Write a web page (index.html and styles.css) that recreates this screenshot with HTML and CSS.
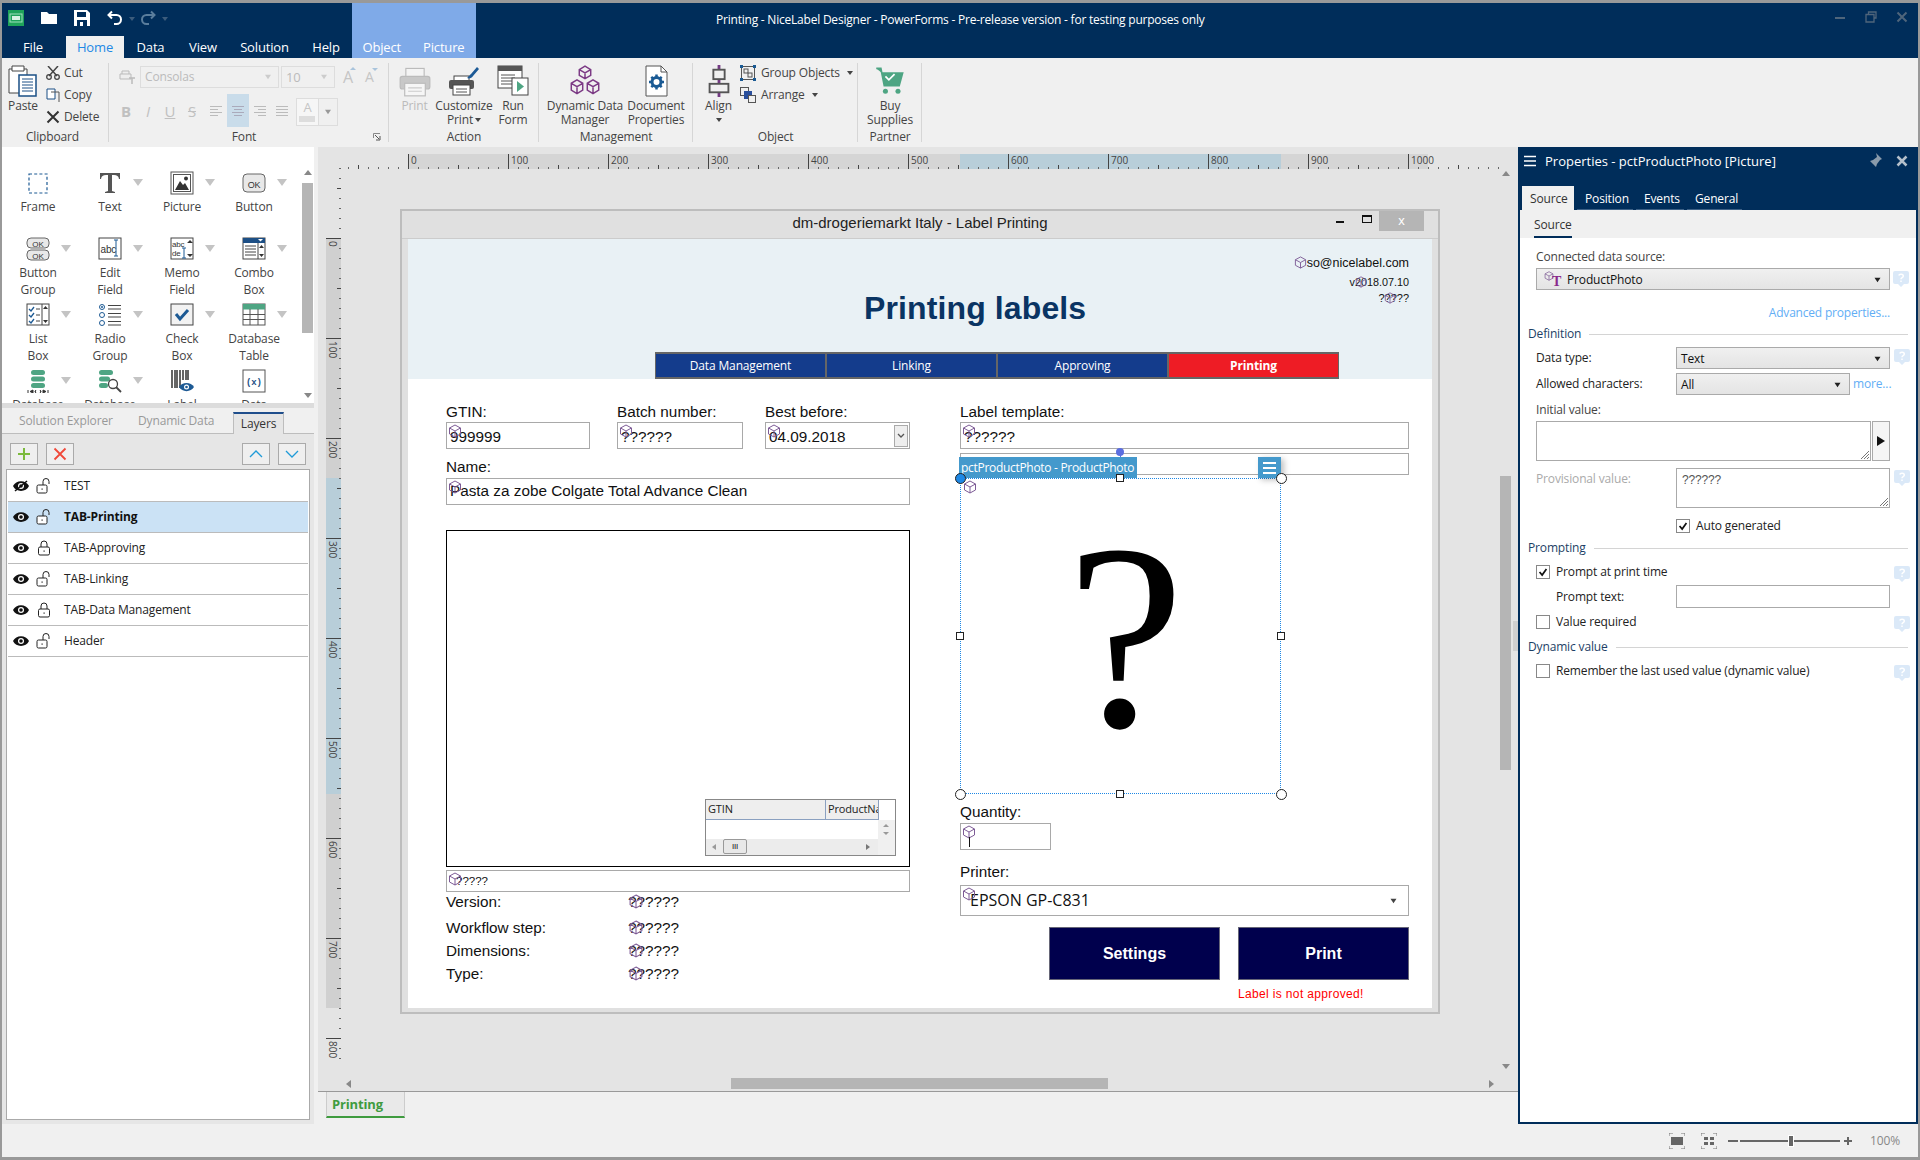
FILE: index.html
```html
<!DOCTYPE html>
<html lang="en">
<head>
<meta charset="utf-8">
<title>Printing - NiceLabel Designer</title>
<link rel="stylesheet" href="styles.css">
</head>
<body>
<svg class="defs" aria-hidden="true"><defs>
<symbol id="cube" viewBox="0 0 14 14"><path d="M7 1l5.500 3v6L7 13l-5.500-3V4zM1.500 4L7 7l5.500-3M7 7v6" fill="none" stroke="#7d5b96" stroke-width="1"/></symbol>
<symbol id="arrow" viewBox="0 0 10 8"><path d="M1 1h8L5 7z" fill="currentColor"/></symbol>
<symbol id="eye" viewBox="0 0 16 12"><path d="M0 6c3-6.500 13-6.500 16 0-3 6.500-13 6.500-16 0z" fill="#111"/><circle cx="8" cy="6" r="3" fill="#fff"/><circle cx="8" cy="6" r="1.800" fill="#111"/></symbol>
<symbol id="unlock" viewBox="0 0 16 16"><rect x="1" y="7" width="10" height="8" rx="1.500" fill="#fff" stroke="#222"/><path d="M7 7V3.500a3 3 0 0 1 6 0V6" fill="none" stroke="#222"/><rect x="5.500" y="10.500" width="1.200" height="1.200" fill="#222"/></symbol>
<symbol id="lock" viewBox="0 0 16 16"><rect x="2.500" y="7" width="11" height="8" rx="1.500" fill="#fff" stroke="#222"/><path d="M5 7V4a3 3 0 0 1 6 0v3" fill="none" stroke="#222"/><rect x="7.500" y="10.500" width="1.200" height="1.200" fill="#222"/></symbol>
<symbol id="help" viewBox="0 0 16 16"><path d="M2 0h12a2 2 0 0 1 2 2v9a2 2 0 0 1-2 2h-3l-3 3-3-3H2a2 2 0 0 1-2-2V2a2 2 0 0 1 2-2z" fill="#dbe9f8"/><path d="M5.800 4.500C6.200 2.800 10.300 2.800 10.300 5c0 1.700-2.300 1.500-2.300 3.300M8 9.600v1.300" fill="none" stroke="#fff" stroke-width="1.500"/></symbol>
<symbol id="check" viewBox="0 0 14 14"><path d="M3 7l3 3.500L11 3.500" fill="none" stroke="#111" stroke-width="2"/></symbol>
<symbol id="grip" viewBox="0 0 12 12"><path d="M11 3l-8 8M11 6l-5 5M11 9l-2 2" stroke="#777" fill="none"/></symbol>
</defs></svg>

<div class="app">
  <header class="titlebar">
    <div class="tb-left">
      <div class="qat">
        <svg class="qi" viewBox="0 0 16 16"><rect width="16" height="16" fill="#1fa35a"/><rect x="2" y="4" width="12" height="8" fill="none" stroke="#9fe0bc"/><rect x="4" y="6" width="8" height="4" fill="#d8f3e3"/></svg>
        <svg class="qi" viewBox="0 0 16 16"><path d="M0 2h6l2 2h8v10H0z" fill="#fff"/></svg>
        <svg class="qi" viewBox="0 0 16 16"><path d="M0 0h13l3 3v13H0z" fill="#fff"/><rect x="3" y="2" width="9" height="5" fill="#002d5a"/><rect x="3" y="10" width="10" height="6" fill="#002d5a"/><rect x="6" y="12" width="3" height="4" fill="#fff"/></svg>
        <svg class="qi" viewBox="0 0 16 16"><path d="M5 1.500L1.500 5 5 8.500M2 5h7.500a4.500 4.500 0 0 1 0 9H7" fill="none" stroke="#fff" stroke-width="2"/></svg>
        <i class="qm"></i>
        <svg class="qi dim" viewBox="0 0 16 16"><path d="M11 1.500L14.500 5 11 8.500M14 5H6.500a4.500 4.500 0 0 0 0 9H9" fill="none" stroke="#5a7d9c" stroke-width="2"/></svg>
        <i class="qm"></i>
      </div>
      <nav class="tabs">
        <span class="tab t-file">File</span>
        <span class="tab t-home">Home</span>
        <span class="tab t-data">Data</span>
        <span class="tab t-view">View</span>
        <span class="tab t-sol">Solution</span>
        <span class="tab t-help">Help</span>
      </nav>
    </div>
    <div class="context">
      <span class="tab t-obj">Object</span>
      <span class="tab t-pic">Picture</span>
    </div>
    <div class="wintitle">Printing - NiceLabel Designer - PowerForms - Pre-release version - for testing purposes only</div>
    <div class="winctl">
      <svg viewBox="0 0 12 12"><path d="M1 7h10" stroke="#4f657b" stroke-width="2"/></svg>
      <svg viewBox="0 0 12 12"><path d="M3.500 3V1h7.500v6H9M1 3.500h8V11H1z" fill="none" stroke="#4f657b" stroke-width="1.300"/></svg>
      <svg viewBox="0 0 12 12"><path d="M1.500 1.500l9 9M10.500 1.500l-9 9" stroke="#4f657b" stroke-width="2"/></svg>
    </div>
  </header>

  <section class="ribbon">
    <div class="group g-clip">
      <div class="g-body">
        <div class="big b-paste">
          <svg class="bi" viewBox="0 0 30 32"><path d="M1 4h18v24H1z" fill="#fff" stroke="#444"/><path d="M4 1h12v5H4z" fill="#fff" stroke="#444"/><rect x="11" y="10" width="17" height="21" fill="#fff" stroke="#1a4f85" stroke-width="1.500"/><path d="M14 14h11M14 17h11M14 20h11M14 23h11M14 26h11" stroke="#1a4f85"/></svg>
          <span>Paste</span>
        </div>
        <div class="smalls">
          <div class="sm"><svg viewBox="0 0 14 14"><path d="M2 0l9 10M12 0L3 10" stroke="#444" stroke-width="1.500"/><circle cx="3" cy="11" r="2.300" fill="none" stroke="#444" stroke-width="1.300"/><circle cx="11" cy="11" r="2.300" fill="none" stroke="#444" stroke-width="1.300"/></svg><span>Cut</span></div>
          <div class="sm"><svg viewBox="0 0 14 14"><path d="M1 1h8v10H1z" fill="#fff" stroke="#1a4f85"/><path d="M5 4h8v10" fill="none" stroke="#555"/></svg><span>Copy</span></div>
          <div class="sm"><svg viewBox="0 0 14 14"><path d="M1.500 1.500l11 11M12.500 1.500l-11 11" stroke="#333" stroke-width="2"/></svg><span>Delete</span></div>
        </div>
      </div>
      <div class="g-label">Clipboard</div>
    </div>

    <div class="group g-font">
      <div class="g-body fontbody">
        <div class="frow1">
          <svg class="fp" viewBox="0 0 16 14"><path d="M3 4V1h7v3M1 4h11v5H1z" fill="#eee" stroke="#bbb"/><path d="M10 8h6M13 8v6" stroke="#bbb" stroke-width="1.500"/></svg>
          <div class="fcombo c-name"><span>Consolas</span><svg class="carr"><use href="#arrow"/></svg></div>
          <div class="fcombo c-size"><span>10</span><svg class="carr"><use href="#arrow"/></svg></div>
          <span class="grow-a">A</span><span class="shrink-a">A</span>
        </div>
        <div class="frow2">
          <span class="fb f-b">B</span><span class="fb f-i">I</span><span class="fb f-u">U</span><span class="fb f-s">S</span>
          <span class="fb al"><svg viewBox="0 0 12 10"><path d="M0 .500h12M0 3.500h8M0 6.500h12M0 9.500h8" stroke="#bbb"/></svg></span>
          <span class="fb al sel"><svg viewBox="0 0 12 10"><path d="M0 .500h12M2 3.500h8M0 6.500h12M2 9.500h8" stroke="#aab"/></svg></span>
          <span class="fb al"><svg viewBox="0 0 12 10"><path d="M0 .500h12M4 3.500h8M0 6.500h12M4 9.500h8" stroke="#bbb"/></svg></span>
          <span class="fb al"><svg viewBox="0 0 12 10"><path d="M0 .500h12M0 3.500h12M0 6.500h12M0 9.500h12" stroke="#bbb"/></svg></span>
          <div class="fcolor"><span class="fc-a">A<i class="fc-bar"></i></span><span class="fc-d"><svg class="carr"><use href="#arrow"/></svg></span></div>
        </div>
      </div>
      <div class="g-label">Font</div>
      <svg class="launcher" viewBox="0 0 8 8"><path d="M.500 5V.500H7" fill="none" stroke="#888"/><path d="M2 2l4 4M7 3v4H3" fill="none" stroke="#555"/></svg>
    </div>

    <div class="group g-action">
      <div class="g-body">
        <div class="big b-print off">
          <svg class="bi" viewBox="0 0 28 28"><rect x="6" y="3" width="16" height="8" fill="#f4f4f4" stroke="#bbb"/><rect x="1" y="10" width="26" height="11" rx="2" fill="#c8c8c8" stroke="#bbb"/><rect x="5" y="16" width="18" height="11" fill="#f6f6f6" stroke="#bbb"/><path d="M8 20h12M8 23h12" stroke="#ccc"/></svg>
          <span>Print</span>
        </div>
        <div class="big b-cust">
          <svg class="bi" viewBox="0 0 32 30"><rect x="6" y="10" width="15" height="6" fill="#fff" stroke="#444"/><rect x="1" y="14" width="25" height="9" rx="2" fill="#555"/><rect x="5" y="19" width="17" height="10" fill="#fff" stroke="#444"/><path d="M8 23h11M8 26h11" stroke="#555"/><path d="M19 12c2-1 2-3 4-4l6-7 2 2-6 7c-1 2-4 3-6 2z" fill="#1d5a96"/></svg>
          <span>Customize<br>Print<i class="mini"></i></span>
        </div>
        <div class="big b-run">
          <svg class="bi" viewBox="0 0 32 32"><rect x="1" y="1" width="24" height="22" fill="#fff" stroke="#444"/><rect x="1" y="1" width="24" height="5" fill="#555"/><path d="M4 10h14M4 13h14M4 16h14M4 19h14" stroke="#555"/><rect x="15" y="13" width="16" height="17" fill="#fff" stroke="#444"/><path d="M20 16l7 5.500-7 5.500z" fill="#4ea583"/></svg>
          <span>Run<br>Form</span>
        </div>
      </div>
      <div class="g-label">Action</div>
    </div>

    <div class="group g-mgmt">
      <div class="g-body">
        <div class="big b-dyn">
          <svg class="bi" viewBox="0 0 28 28"><g fill="none" stroke="#7c3a85" stroke-width="1.300"><path d="M14 1l5 3v5l-5 3-5-3V4zM9 4l5 3 5-3M14 7v5"/><path d="M7 13l5 3v6l-5 3-5-3v-6zM2 16l5 3 5-3M7 19v6"/><path d="M21 13l5 3v6l-5 3-5-3v-6zM16 16l5 3 5-3M21 19v6"/></g></svg>
          <span>Dynamic Data<br>Manager</span>
        </div>
        <div class="big b-doc">
          <svg class="bi" viewBox="0 0 28 32"><path d="M4 1h15l6 6v24H4z" fill="#fff" stroke="#555"/><path d="M19 1v6h6" fill="none" stroke="#555"/><circle cx="14.500" cy="17" r="4.500" fill="none" stroke="#1a5a94" stroke-width="3"/><path d="M14.500 9.500v3M14.500 21.500v3M7 17h3M19 17h3M9.300 11.800l2 2M17.700 20.200l2 2M19.700 11.800l-2 2M11.300 20.200l-2 2" stroke="#1a5a94" stroke-width="2.500"/></svg>
          <span>Document<br>Properties</span>
        </div>
      </div>
      <div class="g-label">Management</div>
    </div>

    <div class="group g-obj">
      <div class="g-body">
        <div class="big b-align">
          <svg class="bi" viewBox="0 0 22 34"><rect x="9.500" y="0" width="3" height="34" fill="#743a84"/><rect x="5" y="5" width="12" height="10" fill="#f0f0f0" stroke="#555" stroke-width="2"/><rect x="1" y="20" width="20" height="9" fill="#f0f0f0" stroke="#555" stroke-width="2"/></svg>
          <span>Align<br><i class="mini center"></i></span>
        </div>
        <div class="smalls objs">
          <div class="sm"><svg viewBox="0 0 16 16"><rect x="1.500" y="1.500" width="13" height="13" fill="none" stroke="#555"/><rect x="4" y="4" width="4" height="4" fill="none" stroke="#555"/><rect x="8" y="8" width="4" height="4" fill="none" stroke="#555"/><g fill="#1a5a94"><rect width="3" height="3"/><rect x="13" width="3" height="3"/><rect y="13" width="3" height="3"/><rect x="13" y="13" width="3" height="3"/></g></svg><span>Group Objects</span><i class="mini"></i></div>
          <div class="sm"><svg viewBox="0 0 16 16"><rect x=".500" y=".500" width="8" height="8" fill="none" stroke="#555"/><rect x="4" y="4" width="8" height="8" fill="#2a4f9c"/><rect x="8.500" y="8.500" width="7" height="7" fill="#f0f0f0" stroke="#555"/></svg><span>Arrange</span><i class="mini"></i></div>
        </div>
      </div>
      <div class="g-label">Object</div>
    </div>

    <div class="group g-partner">
      <div class="g-body">
        <div class="big b-buy">
          <svg class="bi" viewBox="0 0 26 28"><path d="M1 3h4l3 15h13l3-11H6" fill="#4ea583" stroke="#4ea583" stroke-width="1.500"/><path d="M9 10l3 3 5-5" fill="none" stroke="#fff" stroke-width="1.500"/><circle cx="9" cy="23" r="2.200" fill="#4ea583"/><circle cx="20" cy="23" r="2.200" fill="#4ea583"/></svg>
          <span>Buy<br>Supplies</span>
        </div>
      </div>
      <div class="g-label">Partner</div>
    </div>
  </section>

  <main class="main">
    <aside class="left">
      <div class="toolbox">
        <div class="tool-grid">
          <div class="tool"><svg class="ti" viewBox="0 0 24 24"><rect x="3" y="3" width="18" height="19" fill="none" stroke="#1d5a94" stroke-width="1.200" stroke-dasharray="3 2.200"/></svg><span>Frame</span></div>
          <div class="tool drop"><svg class="ti" viewBox="0 0 24 24"><path d="M2 2h20v6h-1c-.5-3-2-4-5-4h-2v16l3 1v1H7v-1l3-1V4H8c-3 0-4.500 1-5 4H2z" fill="#555"/></svg><span>Text</span></div>
          <div class="tool drop"><svg class="ti" viewBox="0 0 24 24"><rect x="1" y="1" width="22" height="22" fill="#fff" stroke="#555"/><rect x="3.500" y="3.500" width="17" height="17" fill="#fff" stroke="#555"/><path d="M5 19l5-9 3 4 2-2 4 7z" fill="#333"/><circle cx="16" cy="7.500" r="2" fill="#333"/></svg><span>Picture</span></div>
          <div class="tool drop"><svg class="ti" viewBox="0 0 24 24"><rect x="1" y="3" width="22" height="18" rx="4" fill="#e8e8e8" stroke="#666"/><text x="12" y="16.500" class="oktxt">OK</text></svg><span>Button</span></div>

          <div class="tool drop"><svg class="ti" viewBox="0 0 24 24"><rect x="1" y="1" width="22" height="10" rx="4" fill="#e8e8e8" stroke="#666"/><rect x="1" y="13" width="22" height="10" rx="4" fill="#e8e8e8" stroke="#666"/><text x="12" y="9.500" class="oktxt sm2">OK</text><text x="12" y="21.500" class="oktxt sm2">OK</text></svg><span>Button<br>Group</span></div>
          <div class="tool drop"><svg class="ti" viewBox="0 0 24 24"><rect x="1" y="1" width="22" height="21" fill="#fff" stroke="#444"/><text x="2.500" y="16" class="abctxt">abc</text><path d="M18 3v16M16 3h4M16 19h4" stroke="#1d5a94"/></svg><span>Edit<br>Field</span></div>
          <div class="tool drop"><svg class="ti" viewBox="0 0 24 24"><rect x="1" y="1" width="22" height="21" fill="#fff" stroke="#444"/><text x="2" y="10" class="abctxt sm3">abc</text><text x="2" y="19" class="abctxt sm3">de</text><path d="M14 11v10M12 11h4M12 21h4" stroke="#1d5a94"/><path d="M17 6l3-3 3 3zM17 17l3 3 3-3z" fill="#333"/></svg><span>Memo<br>Field</span></div>
          <div class="tool drop"><svg class="ti" viewBox="0 0 24 24"><rect x="1" y="1" width="22" height="21" fill="#fff" stroke="#444"/><rect x="1" y="1" width="22" height="5" fill="#1d4f85"/><path d="M16 2l2.500 2.500L21 2z" fill="#fff"/><path d="M3 9h11M3 12h11M3 15h11M3 18h11M16 6v16" stroke="#444"/><path d="M17 11l2.500-3 2.500 3zM17 17l2.500 3 2.500-3z" fill="#333"/></svg><span>Combo<br>Box</span></div>

          <div class="tool drop"><svg class="ti" viewBox="0 0 24 24"><rect x="1" y="1" width="22" height="21" fill="#fff" stroke="#444"/><path d="M3 6l2 2 3-4M3 12l2 2 3-4M3 18l2 2 3-4" fill="none" stroke="#1d5a94" stroke-width="1.300"/><path d="M10 6h4M10 12h4M10 18h4M16 1v21" stroke="#444"/><path d="M17 6l2.500-3 2.500 3zM17 17l2.500 3 2.500-3z" fill="#333"/></svg><span>List<br>Box</span></div>
          <div class="tool drop"><svg class="ti" viewBox="0 0 24 24"><g fill="none" stroke="#1d5a94"><circle cx="4" cy="4" r="2.500"/><circle cx="4" cy="12" r="2.500"/><circle cx="4" cy="20" r="2.500"/></g><circle cx="4" cy="4" r="1" fill="#1d5a94"/><path d="M10 2.500h13M10 6h13M10 10.500h13M10 14h13M10 18.500h13M10 22h13" stroke="#444"/></svg><span>Radio<br>Group</span></div>
          <div class="tool drop"><svg class="ti" viewBox="0 0 24 24"><rect x="1" y="1" width="22" height="21" fill="#f2f2f2" stroke="#444"/><path d="M6 11l4 5 8-9" fill="none" stroke="#1d5a94" stroke-width="3"/></svg><span>Check<br>Box</span></div>
          <div class="tool drop"><svg class="ti" viewBox="0 0 24 24"><rect x="1" y="1" width="22" height="21" fill="#fff" stroke="#555"/><rect x="1" y="1" width="22" height="5.500" fill="#4ea583"/><path d="M1 11.500h22M1 16.500h22M8 6v16M16 6v16" stroke="#555"/></svg><span>Database<br>Table</span></div>

          <div class="tool drop"><svg class="ti" viewBox="0 0 24 24"><g fill="#4ea583"><rect x="5" y="1" width="14" height="5" rx="2.500"/><rect x="5" y="7.500" width="14" height="5" rx="2.500"/><rect x="5" y="14" width="14" height="5" rx="2.500"/></g><path d="M2 24v-3M7 21l-3 1.500L7 24zM10 21l-1 1.500 1 1.500M14 21l1 1.500-1 1.500M17 21l3 1.500-3 1.500zM22 24v-3" stroke="#333" fill="#333"/></svg><span>Database</span></div>
          <div class="tool drop"><svg class="ti" viewBox="0 0 24 24"><g fill="#4ea583"><rect x="1" y="1" width="14" height="5" rx="2.500"/><rect x="1" y="7.500" width="11" height="5" rx="2.500"/><rect x="1" y="14" width="9" height="5" rx="2.500"/></g><circle cx="15" cy="15" r="4.500" fill="#fff" stroke="#444" stroke-width="1.300"/><path d="M18 18l5 5" stroke="#444" stroke-width="1.800"/></svg><span>Database</span></div>
          <div class="tool"><svg class="ti" viewBox="0 0 24 24"><path d="M2 1v18M5 1v18M7 1v18M10 1v18M13 1v10M16 1v10M18 1v10" stroke="#333" stroke-width="1.500"/><path d="M9 18c3-5.500 12-5.500 15 0-3 5.500-12 5.500-15 0z" fill="#1d5a94"/><circle cx="16.500" cy="18" r="2.500" fill="#fff"/><circle cx="16.500" cy="18" r="1.300" fill="#1d5a94"/></svg><span>Label</span></div>
          <div class="tool"><svg class="ti" viewBox="0 0 24 24"><rect x="1" y="1" width="22" height="22" fill="#fff" stroke="#555"/><text x="12" y="15.500" class="xtxt">(x)</text></svg><span>Data</span></div>
        </div>
        <div class="vbar tb-bar"><i class="up"></i><b></b><i class="dn"></i></div>
      </div>
      <div class="split"></div>
      <div class="ptabs">
        <span class="pt pt1">Solution Explorer</span>
        <span class="pt pt2">Dynamic Data</span>
        <span class="pt pt3">Layers</span>
      </div>
      <div class="ltools">
        <button class="lb"><svg viewBox="0 0 14 14"><path d="M7 1v12M1 7h12" stroke="#7cba3d" stroke-width="2"/></svg></button>
        <button class="lb"><svg viewBox="0 0 14 14"><path d="M1.500 1.500l11 11M12.500 1.500l-11 11" stroke="#f0493a" stroke-width="1.800"/></svg></button>
        <button class="lb push"><svg viewBox="0 0 14 14"><path d="M1 10l6-6 6 6" fill="none" stroke="#1f9bd8" stroke-width="1.300"/></svg></button>
        <button class="lb"><svg viewBox="0 0 14 14"><path d="M1 4l6 6 6-6" fill="none" stroke="#1f9bd8" stroke-width="1.300"/></svg></button>
      </div>
      <div class="layers">
        <div class="layer"><svg class="eye" viewBox="0 0 16 12"><use href="#eye"/><path d="M2 11L14 1" stroke="#111" stroke-width="1.500"/></svg><svg class="lk"><use href="#unlock"/></svg><span>TEST</span></div>
        <div class="layer active"><svg class="eye"><use href="#eye"/></svg><svg class="lk"><use href="#unlock"/></svg><span>TAB-Printing</span></div>
        <div class="layer"><svg class="eye"><use href="#eye"/></svg><svg class="lk"><use href="#lock"/></svg><span>TAB-Approving</span></div>
        <div class="layer"><svg class="eye"><use href="#eye"/></svg><svg class="lk"><use href="#unlock"/></svg><span>TAB-Linking</span></div>
        <div class="layer"><svg class="eye"><use href="#eye"/></svg><svg class="lk"><use href="#lock"/></svg><span>TAB-Data Management</span></div>
        <div class="layer"><svg class="eye"><use href="#eye"/></svg><svg class="lk"><use href="#unlock"/></svg><span>Header</span></div>
      </div>
    </aside>
    <div class="gap"></div>

    <div class="designer">
      <div class="canvas">
        <div class="hruler">
          <div class="h-track"><i class="h-sel"></i></div>
          <div class="h-labels"><span>0</span><span>100</span><span>200</span><span>300</span><span>400</span><span>500</span><span>600</span><span>700</span><span>800</span><span>900</span><span>1000</span></div>
        </div>
        <div class="vruler">
          <div class="v-track"><i class="v-sel"></i></div>
          <div class="v-labels"><span>0</span><span>100</span><span>200</span><span>300</span><span>400</span><span>500</span><span>600</span><span>700</span><span>800</span></div>
        </div>

        <div class="form">
          <div class="form-title">
            <span>dm-drogeriemarkt Italy - Label Printing</span>
            <i class="fw-min"></i><i class="fw-max"></i><b class="fw-x">x</b>
          </div>
          <div class="form-body">
            <div class="hband"></div>
            <h1 class="ctl h-title">Printing labels</h1>
            <div class="ctl h-mail">so@nicelabel.com<svg class="cube cb-mail"><use href="#cube"/></svg></div>
            <div class="ctl h-ver">v2018.07.10<svg class="cube cb-ver"><use href="#cube"/></svg></div>
            <div class="ctl h-q">?????<svg class="cube cb-q"><use href="#cube"/></svg></div>
            <div class="ctl ftabs"><span>Data Management</span><span>Linking</span><span>Approving</span><span class="on">Printing</span></div>

            <label class="ctl lbl l-gtin">GTIN:</label>
            <div class="ctl inp i-gtin"><svg class="cube"><use href="#cube"/></svg>999999</div>
            <label class="ctl lbl l-batch">Batch number:</label>
            <div class="ctl inp i-batch"><svg class="cube"><use href="#cube"/></svg>??????</div>
            <label class="ctl lbl l-best">Best before:</label>
            <div class="ctl inp i-best"><svg class="cube"><use href="#cube"/></svg>04.09.2018<span class="spin"><svg viewBox="0 0 10 8"><path d="M2 2l3 3 3-3" fill="none" stroke="#555" stroke-width="1.300"/></svg></span></div>
            <label class="ctl lbl l-name">Name:</label>
            <div class="ctl inp i-name"><svg class="cube"><use href="#cube"/></svg>Pasta za zobe Colgate Total Advance Clean</div>

            <div class="ctl blackbox"></div>
            <div class="ctl dbgrid">
              <div class="dg-head"><span class="dg-c1">GTIN</span><span class="dg-c2">ProductNa</span></div>
              <div class="dg-body"></div>
              <div class="dg-scroll"><i class="ar-l"></i><b class="dg-thumb">III</b><i class="ar-r"></i></div>
              <div class="dg-v"><i class="ar-u"></i><i class="ar-d"></i></div>
            </div>
            <div class="ctl inp i-small"><svg class="cube"><use href="#cube"/></svg>?????</div>

            <label class="ctl lbl l-ver">Version:</label><div class="ctl val v-ver"><svg class="cube"><use href="#cube"/></svg>??????</div>
            <label class="ctl lbl l-wf">Workflow step:</label><div class="ctl val v-wf"><svg class="cube"><use href="#cube"/></svg>??????</div>
            <label class="ctl lbl l-dim">Dimensions:</label><div class="ctl val v-dim"><svg class="cube"><use href="#cube"/></svg>??????</div>
            <label class="ctl lbl l-type">Type:</label><div class="ctl val v-type"><svg class="cube"><use href="#cube"/></svg>??????</div>

            <label class="ctl lbl l-tpl">Label template:</label>
            <div class="ctl inp i-tpl"><svg class="cube"><use href="#cube"/></svg>??????</div>
            <div class="ctl inp i-tpl2"></div>

            <div class="ctl pic">?</div>
            <svg class="cube ctl cb-pic"><use href="#cube"/></svg>
            <div class="ctl rot-line"></div>
            <div class="ctl sel-tag">pctProductPhoto - ProductPhoto</div>
            <div class="ctl sel-menu"><i></i><i></i><i></i></div>
            <i class="ctl hd round rot"></i>
            <i class="ctl hd round tl"></i><i class="ctl hd round tr"></i><i class="ctl hd round bl"></i><i class="ctl hd round br"></i>
            <i class="ctl hd sq tc"></i><i class="ctl hd sq bc"></i><i class="ctl hd sq ml"></i><i class="ctl hd sq mr"></i>

            <label class="ctl lbl l-qty">Quantity:</label>
            <div class="ctl inp i-qty"><svg class="cube"><use href="#cube"/></svg><span class="caret"></span></div>
            <label class="ctl lbl l-prn">Printer:</label>
            <div class="ctl inp i-prn"><svg class="cube"><use href="#cube"/></svg>EPSON GP-C831<svg class="prn-arr"><use href="#arrow"/></svg></div>
            <div class="ctl act a-set">Settings</div>
            <div class="ctl act a-prn">Print</div>
            <div class="ctl note">Label is not approved!</div>
          </div>
        </div>

        <div class="vbar cv-bar"><i class="up"></i><b></b><i class="dn"></i></div>
        <div class="hbar"><i class="ar-l"></i><b></b><i class="ar-r"></i></div>
        <div class="grip"></div>
      </div>
      <div class="sheets"><span class="sheet">Printing</span></div>
    </div>

    <aside class="props">
      <div class="p-head">
        <svg class="p-ham" viewBox="0 0 12 12"><path d="M0 1.500h12M0 6h12M0 10.500h12" stroke="#fff" stroke-width="1.500"/></svg>
        <span class="p-title">Properties - pctProductPhoto [Picture]</span>
        <svg class="p-pin" viewBox="0 0 16 16"><path d="M10 0l6 6-2 1-3 4-1 3-3-3-5 5 5-5-3-3 3-1 4-3z" fill="#8a9bab"/></svg>
        <svg class="p-x" viewBox="0 0 12 12"><path d="M1.500 1.500l9 9M10.500 1.500l-9 9" stroke="#b5c0cb" stroke-width="2.500"/></svg>
      </div>
      <div class="p-tabs">
        <span class="pp on">Source</span><span class="pp">Position</span><span class="pp">Events</span><span class="pp">General</span>
      </div>
      <div class="p-sub"><span>Source</span></div>
      <div class="p-body">
        <div class="pr r1">Connected data source:</div>
        <div class="pr r2 combo full"><svg class="cube cb-ds"><use href="#cube"/></svg><span class="ds-t">T</span><span>ProductPhoto</span><svg class="co-arr"><use href="#arrow"/></svg><svg class="hlp"><use href="#help"/></svg></div>
        <div class="pr r3 adv">Advanced properties...</div>
        <div class="pr r4 sec"><span>Definition</span></div>
        <div class="pr r5 fld"><span class="fl">Data type:</span><div class="combo"><span>Text</span><svg class="co-arr"><use href="#arrow"/></svg></div><svg class="hlp"><use href="#help"/></svg></div>
        <div class="pr r6 fld"><span class="fl">Allowed characters:</span><div class="combo"><span>All</span><svg class="co-arr"><use href="#arrow"/></svg></div><span class="more">more...</span></div>
        <div class="pr r7">Initial value:</div>
        <div class="pr r8 tarow"><div class="ta"><svg class="tgrip"><use href="#grip"/></svg></div><div class="tabtn"><svg viewBox="0 0 8 10"><path d="M0 0l8 5-8 5z" fill="#111"/></svg></div></div>
        <div class="pr r9 fld dis"><span class="fl">Provisional value:</span><div class="ta prov">??????<svg class="tgrip"><use href="#grip"/></svg></div><svg class="hlp"><use href="#help"/></svg></div>
        <div class="pr r10 chk ind"><span class="cb"><svg><use href="#check"/></svg></span><span>Auto generated</span></div>
        <div class="pr r11 sec"><span>Prompting</span></div>
        <div class="pr r12 chk"><span class="cb"><svg><use href="#check"/></svg></span><span>Prompt at print time</span><svg class="hlp"><use href="#help"/></svg></div>
        <div class="pr r13 fld"><span class="fl fl2">Prompt text:</span><div class="tx"></div></div>
        <div class="pr r14 chk"><span class="cb"></span><span>Value required</span><svg class="hlp"><use href="#help"/></svg></div>
        <div class="pr r15 sec"><span>Dynamic value</span></div>
        <div class="pr r16 chk"><span class="cb"></span><span>Remember the last used value (dynamic value)</span><svg class="hlp"><use href="#help"/></svg></div>
      </div>
    </aside>
  </main>

  <footer class="status">
    <svg class="st-i" viewBox="0 0 16 16"><path d="M0 3V0h4M12 0h4v3M16 13v3h-4M4 16H0v-3" fill="none" stroke="#777"/><rect x="2" y="4" width="12" height="8" fill="#666"/></svg>
    <svg class="st-i" viewBox="0 0 16 16"><path d="M0 3V0h4M12 0h4v3M16 13v3h-4M4 16H0v-3" fill="none" stroke="#777"/><rect x="3" y="4" width="4" height="3" fill="#666"/><rect x="9" y="4" width="4" height="3" fill="#666"/><rect x="3" y="9" width="4" height="3" fill="#666"/><rect x="9" y="9" width="4" height="3" fill="#666"/></svg>
    <div class="zoom"><i class="z-minus"></i><div class="z-track"><b></b></div><i class="z-plus"></i></div>
    <span class="pct">100%</span>
  </footer>
</div>
</body>
</html>
```
FILE: styles.css
```css
* { box-sizing: border-box; }
html, body { margin: 0; padding: 0; }
body {
  width: 1920px; height: 1160px; overflow: hidden;
  font: 12px/14px "Open Sans", "Noto Sans", sans-serif;
  letter-spacing: -.15px;
  color: #333; background: #999;
}
.defs { position: absolute; width: 0; height: 0; }
i, b { font-style: normal; }
.app { height: 1160px; padding: 3px 2px; display: flex; flex-direction: column; }

/* title bar */
.titlebar { height: 55px; background: #002d5a; display: flex; flex: none; }
.tb-left { width: 350px; display: flex; flex-direction: column; }
.qat { height: 33px; display: flex; align-items: flex-start; padding: 7px 0 0 6px; gap: 17px; }
.qi { width: 16px; height: 16px; flex: none; }
.qm { border: 3px solid transparent; border-top: 4px solid #3c5c7c; border-bottom: 0; margin: 7px -12px 0 -11px; flex: none; }
.tabs { height: 22px; position: relative; display: flex; }
.tab { color: #fff; font-size: 13px; line-height: 23px; text-align: center; display: block; }
.t-file { width: 62px; }
.t-home { width: 58px; margin-left: 2px; background: #f0f0f0; color: #1e88e5; }
.t-data { width: 53px; }
.t-view { width: 52px; }
.t-sol { width: 71px; }
.t-help { width: 52px; }
.context { width: 124px; background: #7faae8; display: flex; align-items: flex-end; }
.context .tab { height: 22px; }
.t-obj { width: 60px; }
.t-pic { width: 65px; }
.wintitle { flex: 1; color: #fff; font-size: 12px; line-height: 33px; padding-left: 240px; white-space: nowrap; letter-spacing: -.22px; }
.winctl { display: flex; gap: 19px; padding: 8px 10px 0 0; align-items: flex-start; }
.winctl svg { width: 12px; height: 12px; }

/* ribbon */
.ribbon { height: 89px; background: #f0f0f0; display: flex; flex: none; }
.group { position: relative; display: flex; flex-direction: column; flex: none; height: 89px; }
.group::after { content: ""; position: absolute; right: 0; top: 5px; bottom: 5px; width: 1px; background: #d6d6d6; }
.g-body { height: 71px; display: flex; flex: none; }
.g-label { text-align: center; line-height: 16px; color: #444; }
.g-clip { width: 107px; }
.g-clip .g-label { padding-right: 6px; }
.g-font { width: 280px; }
.g-font .g-label { padding-right: 10px; }
.g-action { width: 150px; padding-left: 3px; }
.g-mgmt { width: 154px; padding-left: 9px; }
.g-mgmt .g-label { margin-left: -9px; }
.g-action .g-label { margin-left: -3px; }
.g-obj { width: 165px; padding-left: 4px; }
.g-obj .g-label { margin-left: -4px; }
.g-partner { width: 64px; }
.big { display: flex; flex-direction: column; align-items: center; text-align: center; padding-top: 7px; white-space: nowrap; color: #444; }
.big span { margin-top: 2px; display: block; }
.bi { height: 32px; width: 32px; flex: none; }
.b-paste { width: 42px; }
.b-print { width: 45px; }
.b-print.off { color: #bbb; }
.b-cust { width: 54px; }
.b-run { width: 44px; }
.b-dyn { width: 74px; }
.b-doc { width: 68px; }
.b-align { width: 43px; }
.b-buy { width: 100%; }
.mini { display: inline-block; border: 3px solid transparent; border-top: 4px solid #444; border-bottom: 0; margin-left: 2px; vertical-align: 2px; }
.mini.center { margin: 0; }
.smalls { padding-top: 4px; padding-left: 2px; }
.sm { height: 22px; display: flex; align-items: center; gap: 4px; white-space: nowrap; color: #444; }
.sm svg { width: 14px; height: 14px; flex: none; }
.objs .sm svg { width: 16px; height: 16px; }
.objs { padding-left: 0; }
.objs .sm { gap: 5px; }

.fontbody { flex-direction: column; padding: 8px 0 0 10px; }
.frow1 { display: flex; align-items: center; height: 22px; }
.fp { width: 16px; height: 14px; flex: none; }
.fcombo { height: 22px; border: 1px solid #ddd; color: #bbb; display: flex; align-items: center; justify-content: space-between; padding: 0 6px 0 4px; font-size: 13px; }
.c-name { width: 139px; margin-left: 5px; font-size: 12px; }
.c-size { width: 54px; margin-left: 2px; }
.carr { width: 8px; height: 6px; color: #ccc; flex: none; }
.grow-a { margin-left: 8px; font-size: 16px; color: #c5c5c5; position: relative; }
.grow-a::after { content: ""; position: absolute; left: 7px; top: -3px; border: 3px solid transparent; border-bottom: 3px solid #a9c4dc; border-top: 0; }
.shrink-a { margin-left: 12px; font-size: 14px; color: #c5c5c5; position: relative; }
.shrink-a::after { content: ""; position: absolute; left: 7px; top: -2px; border: 3px solid transparent; border-top: 3px solid #a9c4dc; border-bottom: 0; }
.frow2 { display: flex; margin-top: 6px; height: 33px; margin-left: -4px; }
.fb { width: 22px; height: 33px; display: flex; align-items: center; justify-content: center; color: #c0c0c0; font: 15px "Open Sans", sans-serif; }
.f-b { font-weight: 700; }
.f-i { font-style: italic; }
.f-u { text-decoration: underline; }
.f-s { text-decoration: line-through; margin-right: 2px; }
.fb svg { width: 12px; height: 10px; }
.fb.sel { background: #c9dcea; }
.fcolor { display: flex; height: 28px; margin: 4px 0 0 3px; border: 1px solid #ddd; }
.fc-a { width: 21px; color: #c5c5c5; font-size: 13px; text-align: center; line-height: 16px; position: relative; display: block; background: #f6f6f6; }
.fc-bar { display: block; width: 16px; height: 6px; margin: 1px 2px; background: #ddd; }
.fc-d { width: 19px; border-left: 1px solid #ddd; display: flex; align-items: center; justify-content: center; }
.fc-d .carr { color: #999; }
.launcher { position: absolute; right: 8px; top: 75px; width: 8px; height: 8px; }

/* main */
.main { height: 977px; display: flex; flex: none; }
.left { width: 312px; background: #e6e6e6; display: flex; flex-direction: column; flex: none; }
.gap { width: 4px; background: #f0f0f0; flex: none; }
.toolbox { height: 256px; background: #fff; overflow: hidden; position: relative; flex: none; }
.tool-grid { display: grid; grid-template-columns: repeat(4, 72px); grid-auto-rows: 66px; padding-top: 24px; }
.tool { display: flex; flex-direction: column; align-items: center; text-align: center; line-height: 17px; color: #444; position: relative; }
.tool span { margin-top: 3px; display: block; }
.ti { width: 24px; height: 24px; flex: none; }
.drop::after { content: ""; position: absolute; left: 59px; top: 8px; border: 5px solid transparent; border-top: 7px solid #c4c4c4; border-bottom: 0; }
.oktxt { font: 9px "Liberation Sans", sans-serif; text-anchor: middle; fill: #333; }
.oktxt.sm2 { font-size: 8px; }
.abctxt { font: 10px "Liberation Sans", sans-serif; fill: #333; }
.abctxt.sm3 { font-size: 8px; }
.xtxt { font: 700 9px "Liberation Mono", monospace; text-anchor: middle; fill: #1d4f85; }
.vbar { position: absolute; display: flex; flex-direction: column; align-items: center; width: 11px; }
.vbar b { display: block; background: #b5b5b5; width: 100%; }
.vbar i { display: block; border: 4px solid transparent; }
.vbar .up { border-bottom: 5px solid #888; border-top: 0; }
.vbar .dn { border-top: 5px solid #888; border-bottom: 0; }
.tb-bar { left: 300px; top: 23px; height: 228px; justify-content: space-between; }
.tb-bar b { height: 150px; margin-bottom: 58px; margin-top: 5px; }
.split { height: 5px; background: #dcdcdc; flex: none; }
.ptabs { height: 26px; background: #f0f0f0; border-bottom: 1px solid #bdbdbd; position: relative; display: flex; flex: none; }
.pt { color: #999; line-height: 26px; display: block; white-space: nowrap; }
.pt1 { margin-left: 17px; width: 119px; }
.pt2 { width: 95px; }
.pt3 { width: 51px; border: 1px solid #bdbdbd; border-bottom: 0; border-top: 2px solid #1f4e8c; background: #e6e6e6; color: #333; text-align: center; margin-top: 4px; height: 22px; line-height: 20px; }
.ltools { height: 35px; display: flex; gap: 8px; padding: 9px 8px 4px; flex: none; }
.lb { width: 28px; height: 22px; padding: 0; border: 1px solid #aaa; background: #efefef; display: flex; align-items: center; justify-content: center; }
.lb svg { width: 14px; height: 14px; }
.push { margin-left: auto; }
.layers { flex: 1; margin: 0 4px 4px; background: #fff; border: 1px solid #aaa; padding: 0 1px; }
.layer { height: 31px; display: flex; align-items: center; border-bottom: 1px solid #bbb; color: #222; }
.layer:first-child { height: 32px; }
.layer span { margin-left: 12px; }
.layer.active { background: #cbe2f5; font-weight: 700; color: #111; }
.eye { width: 16px; height: 12px; margin-left: 5px; flex: none; }
.lk { width: 16px; height: 16px; margin-left: 7px; flex: none; }

/* designer */
.designer { width: 1200px; flex: none; display: flex; flex-direction: column; }
.canvas { height: 945px; background: #e4e4e4; position: relative; overflow: hidden; border-bottom: 1px solid #999; flex: none; }
.hruler {
  position: absolute; left: 27px; top: 7px; width: 1163px; height: 15px;
  font: 10px/12px "Open Sans", sans-serif; color: #444;
}
.hruler::after {
  content: ""; position: absolute; inset: 0;
  background:
    linear-gradient(90deg, #444 1px, transparent 1px) 63px 100% / 100px 15px repeat-x,
    linear-gradient(90deg, #444 1px, transparent 1px) 63px 100% / 50px 4px repeat-x,
    linear-gradient(90deg, #666 1px, transparent 1px) 63px 100% / 10px 2px repeat-x;
}
.h-track { position: absolute; left: 63px; top: 0; width: 1020px; height: 15px; background: #d5d5d5; }
.h-sel { position: absolute; left: 552px; width: 321px; top: 0; bottom: 0; background: #b8ced9; display: block; }
.h-labels { position: absolute; left: 63px; top: 0; display: flex; }
.h-labels span { width: 100px; padding-left: 3px; display: block; flex: none; letter-spacing: 0; }
.vruler {
  position: absolute; left: 8px; top: 21px; width: 15px; height: 897px;
  font: 10px/12px "Open Sans", sans-serif; color: #444;
}
.vruler::after {
  content: ""; position: absolute; inset: 0;
  background:
    linear-gradient(#444 1px, transparent 1px) 100% 70px / 15px 100px repeat-y,
    linear-gradient(#444 1px, transparent 1px) 100% 20px / 4px 50px repeat-y,
    linear-gradient(#666 1px, transparent 1px) 100% 0 / 2px 10px repeat-y;
}
.v-track { position: absolute; left: 0; top: 70px; width: 15px; height: 770px; background: #d0d0d0; }
.v-sel { position: absolute; left: 0; right: 0; top: 240px; height: 316px; background: #b8ced9; display: block; }
.v-labels { position: absolute; top: 70px; left: 0; display: flex; flex-direction: column; }
.v-labels span { height: 100px; writing-mode: vertical-rl; padding-top: 3px; display: block; width: 13px; letter-spacing: 0; }

.form { position: absolute; left: 82px; top: 62px; width: 1040px; height: 805px; background: #e0e0e0; border: 2px solid #bdbdbd; font-family: "Liberation Sans", Arial, sans-serif; letter-spacing: 0; color: #111; }
.form-title { height: 28px; position: relative; text-align: center; font-size: 15px; line-height: 23px; color: #222; border-bottom: 1px solid #ccc; }
.fw-min { position: absolute; left: 934px; top: 10px; width: 8px; height: 2px; background: #111; }
.fw-max { position: absolute; left: 960px; top: 4px; width: 10px; height: 8px; border: 1px solid #111; border-top-width: 2px; }
.fw-x { position: absolute; right: 14px; top: 0; width: 45px; height: 20px; background: #b5b5b5; color: #fff; font-weight: 400; font-size: 13px; line-height: 20px; }
.form-body { margin: 0 6px; height: 769px; background: #fff; position: relative; }
.hband { height: 140px; background: #e9f1f5; }
.ctl { position: absolute; }
.h-title { margin: 0; left: 456px; top: 49px; font-size: 32px; line-height: 40px; font-weight: 700; color: #0a3463; white-space: nowrap; letter-spacing: .12px; }
.h-mail { right: 23px; top: 16px; font-size: 12.500px; line-height: 16px; }
.h-ver { right: 23px; top: 35px; font-size: 10.800px; line-height: 16px; }
.h-q { right: 23px; top: 51px; font-size: 11px; line-height: 16px; }
.ftabs { left: 247px; top: 113px; display: flex; }
.ftabs span { display: block; width: 171px; height: 27px; background: #143c8c; color: #fff; border: 2px solid #666; border-left-width: 1px; border-right-width: 1px; text-align: center; font: 12px/24px "Open Sans", sans-serif; letter-spacing: -.15px; }
.ftabs .on { background: #ee1c25; font-weight: 700; }
.lbl { font-size: 15.300px; line-height: 18px; left: 38px; white-space: nowrap; }
.l-gtin, .l-batch, .l-best { top: 164px; }
.l-batch { left: 209px; }
.l-best { left: 357px; }
.l-name { top: 219px; }
.l-ver { top: 654px; }
.l-wf { top: 680px; }
.l-dim { top: 703px; }
.l-type { top: 726px; }
.l-tpl { left: 552px; top: 164px; }
.l-qty { left: 552px; top: 564px; }
.l-prn { left: 552px; top: 624px; }
.inp { border: 1px solid #a9a9a9; height: 27px; background: #fff; font-size: 15.300px; line-height: 27px; padding-left: 1px; white-space: nowrap; }
.cube { width: 14px; height: 14px; position: absolute; left: 1px; top: 1px; }
.i-gtin { left: 38px; top: 183px; width: 144px; padding-left: 3px; }
.i-batch { left: 209px; top: 183px; width: 126px; padding-left: 3px; }
.i-best { left: 357px; top: 183px; width: 145px; padding-left: 3px; }
.spin { position: absolute; right: 1px; top: 2px; width: 14px; height: 22px; background: #eee; border: 1px solid #aaa; display: flex; align-items: center; justify-content: center; }
.spin svg { width: 10px; height: 8px; }
.i-name { left: 38px; top: 239px; width: 464px; padding-left: 3px; line-height: 23px; }
.blackbox { left: 38px; top: 291px; width: 464px; height: 337px; border: 1px solid #000; background: #fff; }
.dbgrid { left: 297px; top: 560px; width: 191px; height: 57px; border: 1px solid #888; background: #fff; font: 11px "Open Sans", sans-serif; letter-spacing: -.15px; }
.dg-head { height: 20px; display: flex; width: 173px; background: #eee; border-bottom: 1px solid #8aa0c0; line-height: 18px; color: #222; }
.dg-c1 { width: 120px; padding-left: 2px; border-right: 1px solid #8aa0c0; display: block; }
.dg-c2 { width: 53px; padding-left: 2px; border-right: 1px solid #8aa0c0; overflow: hidden; display: block; white-space: nowrap; }
.dg-body { height: 19px; }
.dg-scroll { width: 172px; height: 16px; background: #ececec; position: relative; }
.dg-thumb { position: absolute; left: 17px; top: 0; width: 24px; height: 15px; border: 1px solid #999; border-radius: 2px; background: #e8e8e8; font: 8px/13px "Liberation Sans", sans-serif; text-align: center; }
.ar-l { position: absolute; left: 6px; top: 5px; border: 3px solid transparent; border-right: 4px solid #999; border-left: 0; }
.ar-r { position: absolute; right: 8px; top: 5px; border: 3px solid transparent; border-left: 4px solid #777; border-right: 0; }
.dg-v { position: absolute; right: 0; top: 20px; bottom: 0; width: 17px; background: #f0f0f0; }
.ar-u { position: absolute; left: 5px; top: 4px; border: 3px solid transparent; border-bottom: 3px solid #999; border-top: 0; }
.ar-d { position: absolute; left: 5px; top: 12px; border: 3px solid transparent; border-top: 3px solid #999; border-bottom: 0; }
.i-small { left: 38px; top: 631px; width: 464px; height: 22px; font-size: 11.500px; line-height: 20px; padding-left: 9px; }
.val { left: 220px; font-size: 15.300px; line-height: 18px; }
.val .cube { left: 0; top: 1px; width: 16px; height: 15px; }
.v-ver { top: 654px; }
.v-wf { top: 680px; }
.v-dim { top: 703px; }
.v-type { top: 726px; }
.cb-mail { left: -14px; top: 1px; width: 15px; height: 13px; }
.cb-ver { left: 5px; top: 2px; width: 12px; height: 12px; }
.cb-q { left: 6px; top: 2px; width: 12px; height: 12px; }
.i-tpl { left: 552px; top: 183px; width: 449px; padding-left: 3px; }
.i-tpl2 { left: 552px; top: 214px; width: 449px; height: 22px; }
.pic {
  left: 552px; top: 239px; width: 321px; height: 316px;
  border: 1px dotted #1e88e5; background: #fff; text-align: center;
  font: 265px/316px "Liberation Serif", serif; color: #000; padding-left: 10px;
}
.cb-pic { left: 555px; top: 241px; }
.rot-line { left: 712px; top: 213px; width: 1px; height: 26px; background: #5b6ee0; }
.sel-tag { left: 551px; top: 218px; width: 178px; height: 21px; background: #4499cc; color: #fff; font: 12px/21px "Open Sans", sans-serif; letter-spacing: -.3px; padding-left: 2px; white-space: nowrap; overflow: hidden; }
.sel-menu { left: 850px; top: 218px; width: 23px; height: 21px; background: #4499cc; display: flex; flex-direction: column; justify-content: center; align-items: center; gap: 3px; box-shadow: 3px 2px 6px rgba(0,0,0,.25); }
.sel-menu i { width: 13px; height: 2px; background: #fff; display: block; }
.hd { display: block; background: #fff; border: 1px solid #222; }
.round { width: 11px; height: 11px; border-radius: 50%; }
.sq { width: 8px; height: 8px; }
.tl { left: 546.500px; top: 233.500px; background: #1e88e5; }
.tr { left: 867.500px; top: 233.500px; }
.bl { left: 546.500px; top: 549.500px; }
.br { left: 867.500px; top: 549.500px; }
.tc { left: 708px; top: 235px; }
.bc { left: 708px; top: 551px; }
.ml { left: 548px; top: 393px; }
.mr { left: 869px; top: 393px; }
.rot { left: 708px; top: 209px; width: 8px; height: 8px; background: #5b6ee0; border: 0; }
.i-qty { left: 552px; top: 584px; width: 91px; }
.caret { position: absolute; left: 8px; top: 13px; width: 1px; height: 10px; background: #111; }
.i-prn { left: 552px; top: 646px; width: 449px; height: 31px; padding-left: 9px; font: 16px/29px "Open Sans", sans-serif; }
.prn-arr { position: absolute; right: 10px; top: 12px; width: 9px; height: 6px; color: #444; }
.act { top: 688px; width: 171px; height: 53px; background: #00004d; border: 1px solid #667; color: #fff; font-size: 16px; font-weight: 700; text-align: center; line-height: 52px; }
.a-set { left: 641px; }
.a-prn { left: 830px; }
.note { left: 830px; top: 747px; color: #f00; font-size: 12px; line-height: 16px; letter-spacing: .35px; white-space: nowrap; }

.cv-bar { left: 1182px; top: 24px; height: 902px; justify-content: flex-start; }
.cv-bar b { height: 294px; margin-top: 300px; margin-bottom: 294px; }
.hbar { position: absolute; left: 22px; top: 931px; width: 1156px; height: 11px; }
.hbar b { display: block; position: absolute; left: 391px; top: 0; width: 377px; height: 11px; background: #b5b5b5; }
.hbar .ar-l { left: 6px; top: 2px; border-width: 4px; border-left: 0; border-right-width: 5px; border-right-color: #888; }
.hbar .ar-r { right: 2px; top: 2px; border-width: 4px; border-right: 0; border-left-width: 5px; border-left-color: #888; }
.grip { position: absolute; right: 0; top: 474px; width: 5px; height: 30px; background: #cfcfcf; }
.sheets { flex: 1; background: #f0f0f0; padding-left: 8px; }
.sheet { display: block; width: 79px; height: 26px; background: #e9e9e9; border: 1px solid #ccc; border-top: 0; border-bottom: 2px solid #3f9b3f; color: #3f9b3f; font-weight: 700; font-size: 13px; line-height: 25px; padding-left: 5px; }

/* properties */
.props { width: 400px; flex: none; border: 2px solid #002d5a; border-top: 0; background: #fff; display: flex; flex-direction: column; }
.p-head { height: 39px; background: #002d5a; display: flex; align-items: center; color: #fff; font-size: 13px; letter-spacing: 0; position: relative; flex: none; }
.p-ham { width: 12px; height: 12px; margin: 0 0 11px 4px; flex: none; }
.p-title { margin: 0 0 11px 9px; white-space: nowrap; }
.p-pin { width: 16px; height: 16px; margin: 0 0 11px auto; flex: none; }
.p-x { width: 12px; height: 12px; margin: 0 8px 11px 14px; flex: none; }
.p-tabs { height: 24px; background: #002d5a; display: flex; padding-left: 2px; gap: 3px; flex: none; }
.pp { color: #fff; line-height: 25px; padding: 0 8px; border-bottom: 1px solid #3d6187; display: block; }
.pp.on { background: #f0f0f0; color: #333; border-bottom: 0; padding: 0 8px; width: 52px; }
.pp:nth-child(2) { width: 56px; }
.pp:nth-child(3) { width: 48px; }
.pp:nth-child(4) { width: 55px; }
.p-sub { height: 28px; background: #f0f0f0; padding-left: 14px; flex: none; }
.p-sub span { display: inline-block; height: 28px; line-height: 29px; border-bottom: 2px solid #002d5a; color: #333; }
.p-body { flex: 1; padding: 0 26px 0 16px; color: #222; }
.pr { position: relative; white-space: nowrap; }
.r1 { margin-top: 12px; height: 14px; color: #444; }
.r2 { margin-top: 4px; }
.r3 { margin-top: 16px; height: 14px; }
.r4 { margin-top: 7px; }
.r5 { margin-top: 6px; }
.r6 { margin-top: 4px; }
.r7 { margin-top: 8px; height: 14px; color: #444; }
.r8 { margin-top: 4px; }
.r9 { margin-top: 7px; }
.r10 { margin-top: 10px; }
.r11 { margin-top: 7px; }
.r12 { margin-top: 9px; }
.r13 { margin-top: 5px; }
.r14 { margin-top: 6px; }
.r15 { margin-top: 10px; }
.r16 { margin-top: 9px; }
.combo { height: 22px; border: 1px solid #aaa; background: linear-gradient(#f0f0f0, #e4e4e4); display: flex; align-items: center; padding: 1px 4px 0; position: relative; flex: 1; color: #111; }
.co-arr { position: absolute; right: 7px; top: 8px; width: 9px; height: 6px; color: #222; }
.full { padding-left: 30px; }
.cb-ds { left: 7px; top: 2px; width: 10px; height: 10px; }
.ds-t { position: absolute; left: 15px; top: 5px; color: #8a2a8c; font: 700 14px "Liberation Serif", serif; }
.hlp { position: absolute; right: -20px; top: 2px; width: 16px; height: 16px; }
.adv { text-align: right; color: #62aef5; letter-spacing: -.2px; }
.more { color: #62aef5; margin-left: 3px; width: 37px; flex: none; }
.sec { height: 14px; margin-left: -8px; margin-right: -18px; display: flex; align-items: center; color: #1d3f66; gap: 8px; }
.sec::after { content: ""; flex: 1; height: 1px; background: #d4d4d4; }
.fld { display: flex; align-items: center; }
.fl { width: 140px; flex: none; }
.fl2 { padding-left: 20px; }
.r6 .combo { flex: none; width: 174px; }
.tarow { display: flex; height: 40px; }
.ta { height: 40px; flex: 1; border: 1px solid #aaa; position: relative; margin-right: 1px; }
.tgrip { position: absolute; right: 0; bottom: 0; width: 12px; height: 12px; }
.tabtn { width: 18px; border: 1px solid #aaa; background: #f5f5f5; display: flex; align-items: center; justify-content: center; }
.tabtn svg { width: 8px; height: 10px; }
.dis { align-items: flex-start; }
.dis .fl { color: #aaa; margin-top: 4px; }
.prov { margin-right: 0; padding: 4px 5px; color: #555; font: 12px "Liberation Sans", sans-serif; }
.chk { display: flex; align-items: center; height: 16px; gap: 6px; }
.ind { padding-left: 140px; }
.cb { width: 14px; height: 14px; border: 1px solid #888; flex: none; display: flex; align-items: center; justify-content: center; background: #fff; }
.cb svg { width: 12px; height: 12px; }
.tx { flex: 1; height: 23px; border: 1px solid #aaa; }

/* status */
.status { height: 33px; background: #f0f0f0; flex: none; display: flex; align-items: center; padding-left: 1667px; }
.st-i { width: 16px; height: 16px; margin-right: 16px; flex: none; }
.st-i + .st-i { margin-right: 11px; }
.zoom { display: flex; align-items: center; gap: 2px; }
.z-minus { width: 10px; height: 2px; background: #666; display: block; }
.z-track { width: 100px; height: 2px; background: #666; position: relative; }
.z-track b { position: absolute; left: 49px; top: -4px; width: 4px; height: 10px; background: #666; outline: 1px solid #fff; display: block; }
.z-plus { width: 8px; height: 8px; margin-left: 2px; background: linear-gradient(#666,#666) center / 100% 2px no-repeat, linear-gradient(#666,#666) center / 2px 100% no-repeat; display: block; }
.pct { margin-left: 18px; color: #888; }
```
